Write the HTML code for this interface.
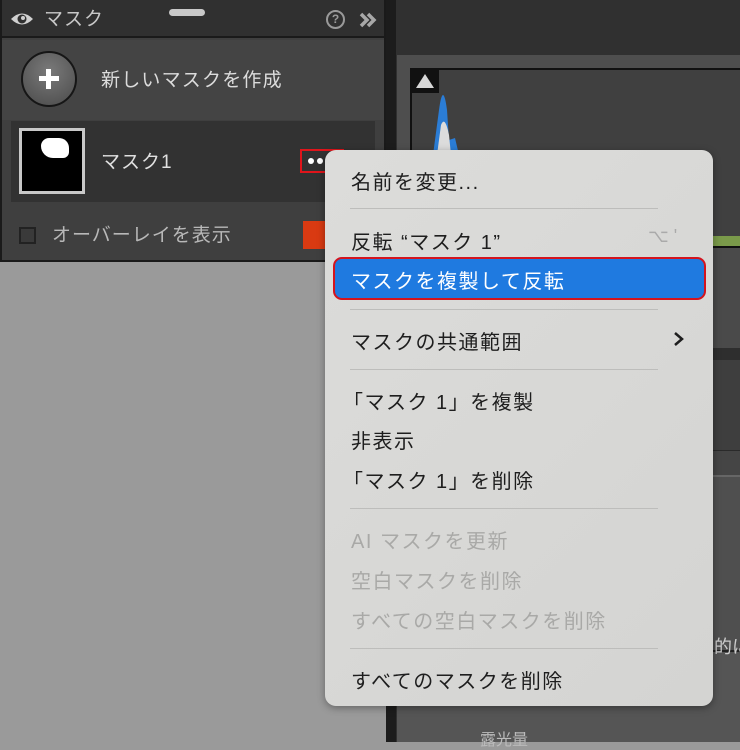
<!DOCTYPE html>
<html><head><meta charset="utf-8"><style>
*{margin:0;padding:0;box-sizing:border-box}
body{width:740px;height:742px;overflow:hidden;background:#9a9a9a;position:relative;font-family:"Liberation Sans","Noto Sans CJK JP",sans-serif}
.a{position:absolute;white-space:nowrap}
.mi{position:absolute;left:351px;font-size:20px;color:#1e1e1e;white-space:nowrap;letter-spacing:1.5px}
.dis{color:#a9a9a7}
.sep{position:absolute;left:350px;width:308px;height:1px;background:#bdbdbb}
</style></head><body>
<!-- left panel -->
<div class="a" style="left:0;top:0;width:386px;height:262px;background:#3f3f3f;border:2px solid #1a1a1a"></div>
<div class="a" style="left:2px;top:0;width:382px;height:38px;background:#303030;border-bottom:2px solid #1a1a1a"></div>
<svg class="a" style="left:10px;top:10px" width="24" height="18" viewBox="0 0 24 18"><path d="M1 9 Q12 -2 23 9 Q12 20 1 9Z" fill="#d0d0d0"/><circle cx="12" cy="9" r="4.5" fill="#303030"/><circle cx="13" cy="8" r="2" fill="#d0d0d0"/></svg>
<div class="a" style="left:44px;top:4px;font-size:19px;color:#c8c8c8;letter-spacing:1px">マスク</div>
<div class="a" style="left:169px;top:9px;width:36px;height:7px;border-radius:4px;background:#c8c8c8"></div>
<div class="a" style="left:326px;top:10px;width:19px;height:19px;border:2px solid #9a9a9a;border-radius:50%;color:#9a9a9a;font-size:12px;font-weight:bold;text-align:center;line-height:15px">?</div>
<svg class="a" style="left:359px;top:12px" width="18" height="16"><path d="M2 2 L8 8 L2 14 M9 2 L15 8 L9 14" stroke="#a8a8a8" stroke-width="3.5" fill="none"/></svg>
<div class="a" style="left:2px;top:40px;width:382px;height:80px;background:#444"></div>
<div class="a" style="left:21px;top:51px;width:56px;height:56px;border-radius:50%;border:2px solid #161616;background:radial-gradient(circle at 50% 35%,#7a7a7a,#4a4a4a)"></div>
<div class="a" style="left:39px;top:76px;width:20px;height:5px;background:#fff"></div>
<div class="a" style="left:46px;top:69px;width:5px;height:20px;background:#fff"></div>
<div class="a" style="left:101px;top:65px;font-size:19px;color:#dcdcdc;letter-spacing:1.2px">新しいマスクを作成</div>
<div class="a" style="left:11px;top:121px;width:364px;height:81px;background:#323232"></div>
<div class="a" style="left:19px;top:128px;width:66px;height:66px;border:3px solid #c8c8c8;background:#000"></div>
<div class="a" style="left:41px;top:138px;width:28px;height:20px;background:#fff;border-radius:8px 10px 6px 12px"></div>
<div class="a" style="left:101px;top:147px;font-size:19px;color:#e0e0e0;letter-spacing:1px">マスク1</div>
<div class="a" style="left:300px;top:149px;width:44px;height:24px;border:2px solid #e0151b"></div>
<div class="a" style="left:308px;top:158px;width:6px;height:6px;border-radius:50%;background:#fff"></div>
<div class="a" style="left:317px;top:158px;width:6px;height:6px;border-radius:50%;background:#fff"></div>
<div class="a" style="left:19px;top:227px;width:17px;height:17px;border:2px solid #222;background:#3a3a3a"></div>
<div class="a" style="left:52px;top:220px;font-size:19px;color:#b8b8b8;letter-spacing:1px">オーバーレイを表示</div>
<div class="a" style="left:303px;top:221px;width:28px;height:28px;background:#d93a12"></div>
<!-- right area -->
<div class="a" style="left:386px;top:0;width:10px;height:742px;background:#1c1c1c"></div>
<div class="a" style="left:396px;top:0;width:344px;height:742px;background:#303030"></div>
<div class="a" style="left:397px;top:55px;width:343px;height:687px;background:#4e4e4e"></div>
<div class="a" style="left:410px;top:68px;width:330px;height:180px;background:#404040;border:2px solid #111;border-right:none"></div>
<div class="a" style="left:412px;top:70px;width:27px;height:23px;background:#111"></div>
<div class="a" style="left:416px;top:74px;width:0;height:0;border-left:9px solid transparent;border-right:9px solid transparent;border-bottom:14px solid #d8d8d8"></div>
<svg class="a" style="left:425px;top:80px" width="40" height="75"><path d="M8 75 L14 30 Q18 0 22 30 L24 60 L30 58 L34 75Z" fill="#2b7dd6"/><path d="M12 75 L16 45 Q20 35 24 55 L26 75Z" fill="#dcdcdc"/></svg>
<div class="a" style="left:712px;top:236px;width:28px;height:10px;background:#7a9a4a"></div>
<div class="a" style="left:397px;top:248px;width:343px;height:100px;background:#4a4a4a"></div>
<div class="a" style="left:397px;top:348px;width:343px;height:12px;background:#2e2e2e"></div>
<div class="a" style="left:397px;top:360px;width:343px;height:90px;background:#3e3e3e"></div>
<div class="a" style="left:397px;top:450px;width:343px;height:25px;background:#454545;border-top:1px solid #2a2a2a"></div>
<div class="a" style="left:397px;top:475px;width:343px;height:175px;background:#4f4f4f;border-top:2px solid #666"></div>
<div class="a" style="left:397px;top:650px;width:343px;height:92px;background:#555;border-top:2px solid #222"></div>
<div class="a" style="left:714px;top:633px;font-size:18px;color:#ccc">的に</div>
<div class="a" style="left:480px;top:726px;font-size:16px;color:#bbb">露光量</div>
<!-- menu -->
<div class="a" style="left:325px;top:150px;width:388px;height:556px;background:linear-gradient(135deg,#dcdcda,#d4d4d2);border-radius:11px;box-shadow:0 2px 8px rgba(0,0,0,.35)"></div>
<div class="mi" style="top:166px">名前を変更...</div>
<div class="sep" style="top:208px"></div>
<div class="mi" style="top:226px">反転 “マスク 1”</div>
<div class="a" style="left:648px;top:226px;font-size:18px;color:#aaa">⌥ '</div>
<div class="a" style="left:333px;top:257px;width:373px;height:43px;background:#1f7ae0;border:2px solid #d4141e;border-radius:9px"></div>
<div class="mi" style="top:265px;color:#fff">マスクを複製して反転</div>
<div class="sep" style="top:309px"></div>
<div class="mi" style="top:326px">マスクの共通範囲</div>
<svg class="a" style="left:673px;top:331px" width="12" height="16"><path d="M2 2 L9 8 L2 14" stroke="#1e1e1e" stroke-width="2.5" fill="none"/></svg>
<div class="sep" style="top:369px"></div>
<div class="mi" style="top:386px;left:343px">「マスク 1」を複製</div>
<div class="mi" style="top:425px">非表示</div>
<div class="mi" style="top:465px;left:343px">「マスク 1」を削除</div>
<div class="sep" style="top:508px"></div>
<div class="mi dis" style="top:525px">AI マスクを更新</div>
<div class="mi dis" style="top:565px">空白マスクを削除</div>
<div class="mi dis" style="top:605px">すべての空白マスクを削除</div>
<div class="sep" style="top:648px"></div>
<div class="mi" style="top:665px">すべてのマスクを削除</div>
</body></html>
